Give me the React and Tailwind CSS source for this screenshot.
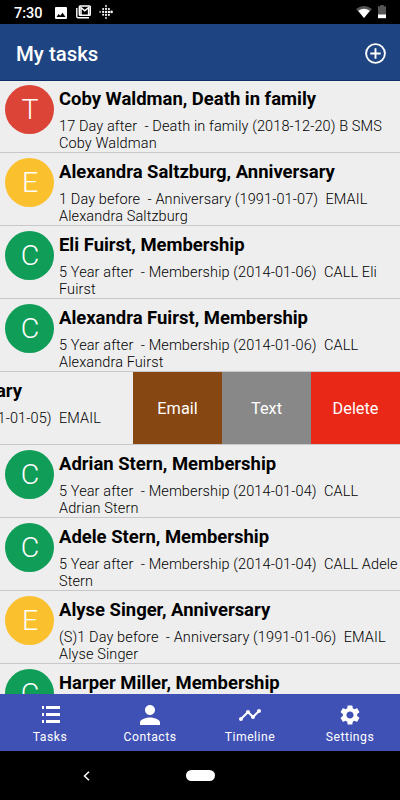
import React from 'react';
import { MdPerson, MdTimeline, MdSettings } from 'react-icons/md';

const TASKS = [
  { letter: 'T', color: 'bg-[#db4437]', title: 'Coby Waldman, Death in family', lines: ['17 Day after  - Death in family (2018-12-20) B SMS', 'Coby Waldman'] },
  { letter: 'E', color: 'bg-[#fbc02d]', title: 'Alexandra Saltzburg, Anniversary', lines: ['1 Day before  - Anniversary (1991-01-07)  EMAIL', 'Alexandra Saltzburg'] },
  { letter: 'C', color: 'bg-[#0f9d58]', title: 'Eli Fuirst, Membership', lines: ['5 Year after  - Membership (2014-01-06)  CALL Eli', 'Fuirst'] },
  { letter: 'C', color: 'bg-[#0f9d58]', title: 'Alexandra Fuirst, Membership', lines: ['5 Year after  - Membership (2014-01-06)  CALL', 'Alexandra Fuirst'] },
  { swiped: true },
  { letter: 'C', color: 'bg-[#0f9d58]', title: 'Adrian Stern, Membership', lines: ['5 Year after  - Membership (2014-01-04)  CALL', 'Adrian Stern'] },
  { letter: 'C', color: 'bg-[#0f9d58]', title: 'Adele Stern, Membership', lines: ['5 Year after  - Membership (2014-01-04)  CALL Adele', 'Stern'] },
  { letter: 'E', color: 'bg-[#fbc02d]', title: 'Alyse Singer, Anniversary', lines: ['(S)1 Day before  - Anniversary (1991-01-06)  EMAIL', 'Alyse Singer'] },
  { letter: 'C', color: 'bg-[#0f9d58]', title: 'Harper Miller, Membership', lines: [] },
];

function StatusBar() {
  return (
    <div className="flex h-6 shrink-0 items-center bg-black pl-[14px] pr-[14px] text-white">
      <span className="w-[41px] pt-[3px] text-[14.5px] font-medium leading-5">7:30</span>
      <svg className="mt-px h-3 w-3" viewBox="0 0 12 12">
        <path fill="white" fillRule="evenodd" d="M1 0h10a1 1 0 0 1 1 1v10a1 1 0 0 1-1 1H1a1 1 0 0 1-1-1V1a1 1 0 0 1 1-1ZM1.5 10h9L7.5 5.8 5.2 8.7 3.7 7Z" />
      </svg>
      <svg className="ml-[9px] h-[14px] w-[15px]" viewBox="0 0 15 14" fill="none" stroke="white">
        <path d="M.8 3v8.5q0 1.3 1.3 1.3H13" strokeWidth="1.4" />
        <rect x="3.4" y="1" width="10.8" height="9.3" rx=".8" strokeWidth="1.6" />
        <path d="M5 10V2.5l3.8 3.2 3.8-3.2V10" strokeWidth="1.5" />
      </svg>
      <svg className="ml-2 h-[14px] w-[14px]" viewBox="0 0 14 14" fill="white">
        <circle cx="7" cy="1" r=".9" /><circle cx="7" cy="3.9" r="1.1" /><circle cx="7" cy="6.9" r="1.2" /><circle cx="7" cy="9.9" r="1.1" /><circle cx="7" cy="12.9" r=".9" />
        <circle cx="4.1" cy="4" r="1" /><circle cx="4.1" cy="6.9" r="1.1" /><circle cx="4.1" cy="9.8" r="1" /><circle cx="1.1" cy="6.9" r=".8" />
        <circle cx="9.9" cy="4" r="1.1" /><circle cx="9.9" cy="6.9" r="1.2" /><circle cx="9.9" cy="9.8" r="1.1" /><circle cx="12.6" cy="6.9" r="1.3" />
      </svg>
      <svg className="ml-auto h-3 w-4" viewBox="0 0 16 12">
        <path fill="#555" d="M0 3Q8-3 16 3L8 12Z" />
        <path fill="white" d="M2.2 4.8Q8 .8 13.8 4.8L8 12Z" />
      </svg>
      <svg className="ml-[6px] h-[14px] w-2" viewBox="0 0 8 14">
        <path fill="#555" d="M2.3 0h3.4v1.3H8V10H0V1.3h2.3Z" />
        <path fill="white" d="M0 9.5h8V13.2H0Z" />
      </svg>
    </div>
  );
}

function TaskRow({ task }) {
  return (
    <div className="flex h-[73px] shrink-0 border-b border-[#c8c8cb] pl-[5px]">
      <div className={`mt-[5px] flex h-[49px] w-[49px] shrink-0 items-center justify-center rounded-full text-[28.5px] font-light leading-none text-white ${task.color}`}>
        <span className="pl-px pt-px">{task.letter}</span>
      </div>
      <div className="ml-[5px] whitespace-pre text-black">
        <div className="pt-[7px] text-[18.45px] font-bold leading-6">{task.title}</div>
        <div className="pt-[7px] text-[14.5px] font-light leading-[17px] tracking-[0.11px]">
          {task.lines.map((line) => (
            <div key={line}>{line}</div>
          ))}
        </div>
      </div>
    </div>
  );
}

function SwipedRow() {
  return (
    <div className="flex h-[73px] shrink-0 border-b border-[#c8c8cb]">
      <div className="flex w-[133px] shrink-0 flex-col overflow-hidden whitespace-pre text-black">
        <div className="flex w-[22px] justify-end pt-[7px] text-[18.45px] font-bold leading-6">Anniversary</div>
        <div className="flex w-[101px] justify-end pt-[7px] text-[14.5px] font-light leading-[17px] tracking-[0.11px]">Anniversary (1991-01-05)  EMAIL</div>
      </div>
      <div className="flex flex-1 text-[16.3px] text-white">
        <div className="flex w-[89px] items-center justify-center bg-[#874712] pt-[2px]">Email</div>
        <div className="flex w-[89px] items-center justify-center bg-[#888888] pt-[2px]">Text</div>
        <div className="flex w-[89px] items-center justify-center bg-[#e92817] pt-[2px]">Delete</div>
      </div>
    </div>
  );
}

function ListIcon() {
  return (
    <svg className="ml-px h-[18px] w-[19px]" viewBox="0 0 19 18" fill="white">
      <path d="M1 0h2v3H1zM5 0h14v3H5zM1 7h2v3H1zM5 7h14v3H5zM1 14h2v3H1zM5 14h14v3H5z" />
    </svg>
  );
}

const TABS = [
  { label: 'Tasks', icon: <ListIcon /> },
  { label: 'Contacts', icon: <MdPerson size={30} className="shrink-0" /> },
  { label: 'Timeline', icon: <MdTimeline size={24} /> },
  { label: 'Settings', icon: <MdSettings size={24} /> },
];

export default function App() {
  return (
    <div className="flex h-[800px] w-[400px] flex-col overflow-hidden bg-[#eeeeee] font-['Roboto',sans-serif]">
      <StatusBar />
      <header className="flex h-[57px] shrink-0 items-center justify-between border-b border-[#0d2f69] bg-[#1e4481] pl-4 pr-[14px] text-white">
        <h1 className="pt-[3px] text-[20.4px] font-medium leading-6">My tasks</h1>
        <svg className="mt-[2px] h-[21px] w-[21px]" viewBox="0 0 21 21" fill="none" stroke="white" strokeWidth="1.9">
          <circle cx="10.5" cy="10.5" r="9.4" />
          <path d="M10.5 5.3v10.4M5.3 10.5h10.4" />
        </svg>
      </header>
      <main className="-mt-px flex min-h-0 flex-1 flex-col overflow-hidden">
        {TASKS.map((task, i) => (task.swiped ? <SwipedRow key={i} /> : <TaskRow key={i} task={task} />))}
      </main>
      <nav className="grid h-[57px] shrink-0 grid-cols-4 bg-[#3f51b5] text-white">
        {TABS.map((tab) => (
          <div key={tab.label} className="flex flex-col items-center">
            <div className="flex h-[41px] items-center justify-center">{tab.icon}</div>
            <span className="-mt-[6px] text-[12.2px] leading-4 tracking-[0.5px]">{tab.label}</span>
          </div>
        ))}
      </nav>
      <footer className="flex h-[49px] shrink-0 items-center bg-black pl-[83px]">
        <svg className="h-[10px] w-[7px]" viewBox="0 0 7 10" fill="none" stroke="white" strokeWidth="1.5">
          <path d="M6 .7 1.5 5 6 9.3" />
        </svg>
        <div className="ml-24 h-[11px] w-[29px] rounded-full bg-white" />
      </footer>
    </div>
  );
}
